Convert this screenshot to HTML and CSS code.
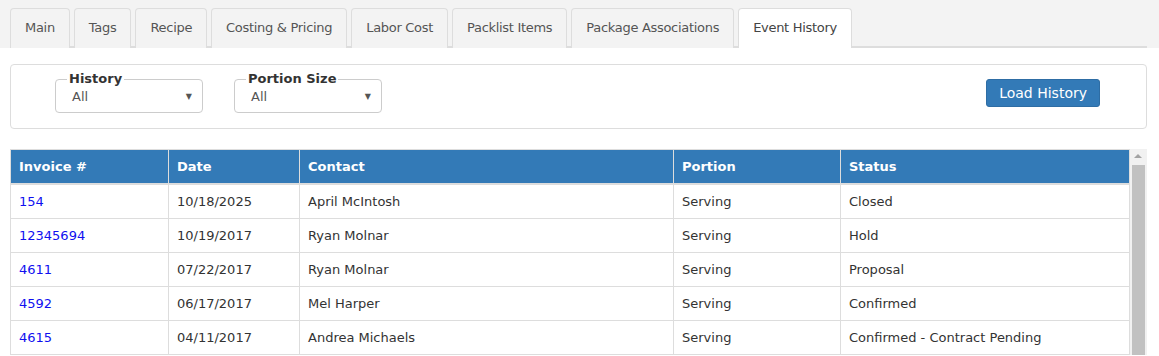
FILE: index.html
```html
<!DOCTYPE html>
<html lang="en">
<head>
    <meta charset="UTF-8">
    <title>Event History</title>
    <link rel="stylesheet" href="styles.css">
</head>
<body>
    <!-- Tab bar -->
    <div class="tab-bar">
        <ul class="tabs">
            <li class="tab">Main</li>
            <li class="tab">Tags</li>
            <li class="tab">Recipe</li>
            <li class="tab">Costing &amp; Pricing</li>
            <li class="tab">Labor Cost</li>
            <li class="tab">Packlist Items</li>
            <li class="tab">Package Associations</li>
            <li class="tab active">Event History</li>
        </ul>
    </div>

    <div class="content">
        <!-- Filters -->
        <div class="filter-panel">
            <fieldset class="filter">
                <legend>History</legend>
                <div class="select"><span>All</span><span class="caret">&#9660;</span></div>
            </fieldset>
            <fieldset class="filter">
                <legend>Portion Size</legend>
                <div class="select"><span>All</span><span class="caret">&#9660;</span></div>
            </fieldset>
            <button class="btn-primary">Load History</button>
        </div>

        <!-- History grid -->
        <div class="grid-wrap">
            <table class="grid">
                <colgroup>
                    <col style="width: 158px">
                    <col style="width: 131px">
                    <col style="width: 374px">
                    <col style="width: 167px">
                    <col>
                </colgroup>
                <thead>
                    <tr>
                        <th>Invoice #</th>
                        <th>Date</th>
                        <th>Contact</th>
                        <th>Portion</th>
                        <th>Status</th>
                    </tr>
                </thead>
                <tbody>
                    <tr><td><a href="#">154</a></td><td>10/18/2025</td><td>April McIntosh</td><td>Serving</td><td>Closed</td></tr>
                    <tr><td><a href="#">12345694</a></td><td>10/19/2017</td><td>Ryan Molnar</td><td>Serving</td><td>Hold</td></tr>
                    <tr><td><a href="#">4611</a></td><td>07/22/2017</td><td>Ryan Molnar</td><td>Serving</td><td>Proposal</td></tr>
                    <tr><td><a href="#">4592</a></td><td>06/17/2017</td><td>Mel Harper</td><td>Serving</td><td>Confirmed</td></tr>
                    <tr><td><a href="#">4615</a></td><td>04/11/2017</td><td>Andrea Michaels</td><td>Serving</td><td>Confirmed - Contract Pending</td></tr>
                </tbody>
            </table>
            <div class="scrollbar">
                <span class="scroll-arrow"></span>
                <div class="scroll-thumb"></div>
            </div>
        </div>
    </div>
</body>
</html>
```

FILE: styles.css
```css
body {
    font-family: 'DejaVu Sans', Verdana, sans-serif;
    font-size: 13px;
    color: #333;
    margin: 0;
    background-color: #fff;
    overflow: hidden;
}

.tab-bar {
    background-color: #f3f3f3;
    padding: 8px 12px 0 10px;
}

.tabs {
    list-style: none;
    margin: 0;
    padding: 0;
    display: flex;
    gap: 4px;
    border-bottom: 2px solid #ddd;
}

.tab {
    padding: 10px 14px 9px 14px;
    line-height: 18px;
    letter-spacing: -0.3px;
    border: 1px solid #ddd;
    border-bottom: none;
    border-radius: 4px 4px 0 0;
    background-color: #f3f3f3;
    color: #555;
    margin-bottom: -2px;
}

.tab.active {
    background-color: #fff;
    color: #444;
    padding-bottom: 11px;
}

.content {
    padding: 16px 12px 0 10px;
}

.filter-panel {
    border: 1px solid #ddd;
    border-radius: 4px;
    height: 63px;
    display: flex;
    align-items: flex-start;
    padding: 0 46px 0 44px;
    gap: 31px;
}

.filter {
    margin: 7px 0 0 0;
    padding: 0 10px 0 16px;
    width: 120px;
    border: 1px solid #ccc;
    border-radius: 4px;
    height: 39px;
}

.filter legend {
    font-weight: bold;
    padding: 0 2px;
    margin-left: -5px;
    line-height: 14px;
    color: #333;
}

.select {
    display: flex;
    justify-content: space-between;
    color: #555;
    line-height: 16px;
    margin-top: 3px;
}

.caret {
    font-size: 8px;
    color: #555;
}

.btn-primary {
    margin: 14px 0 0 auto;
    background-color: #337ab7;
    border: 1px solid #2e6da4;
    border-radius: 3px;
    color: #fff;
    font-family: inherit;
    font-size: 14px;
    padding: 4px 12px;
    height: 28px;
}

.grid-wrap {
    display: flex;
    margin-top: 20px;
}

.grid {
    flex: 1;
    border-collapse: collapse;
    table-layout: fixed;
    border: 1px solid #ddd;
}

.grid th {
    background-color: #337ab7;
    color: #fff;
    text-align: left;
    font-weight: bold;
    padding: 0 8px;
    height: 33px;
    border-left: 1px solid #ddd;
    border-bottom: 2px solid #ddd;
}

.grid td {
    padding: 0 8px;
    height: 33px;
    border: 1px solid #ddd;
    color: #333;
}

.grid a {
    color: #1010f0;
    text-decoration: none;
}

.scrollbar {
    width: 17px;
    background-color: #f1f1f1;
    position: relative;
    flex-shrink: 0;
}

.scroll-arrow {
    position: absolute;
    top: 5px;
    left: 4px;
    border-left: 4px solid transparent;
    border-right: 4px solid transparent;
    border-bottom: 4px solid #a3a3a3;
}

.scroll-thumb {
    position: absolute;
    top: 16px;
    left: 2px;
    width: 13px;
    bottom: 0;
    background-color: #c1c1c1;
}
```
